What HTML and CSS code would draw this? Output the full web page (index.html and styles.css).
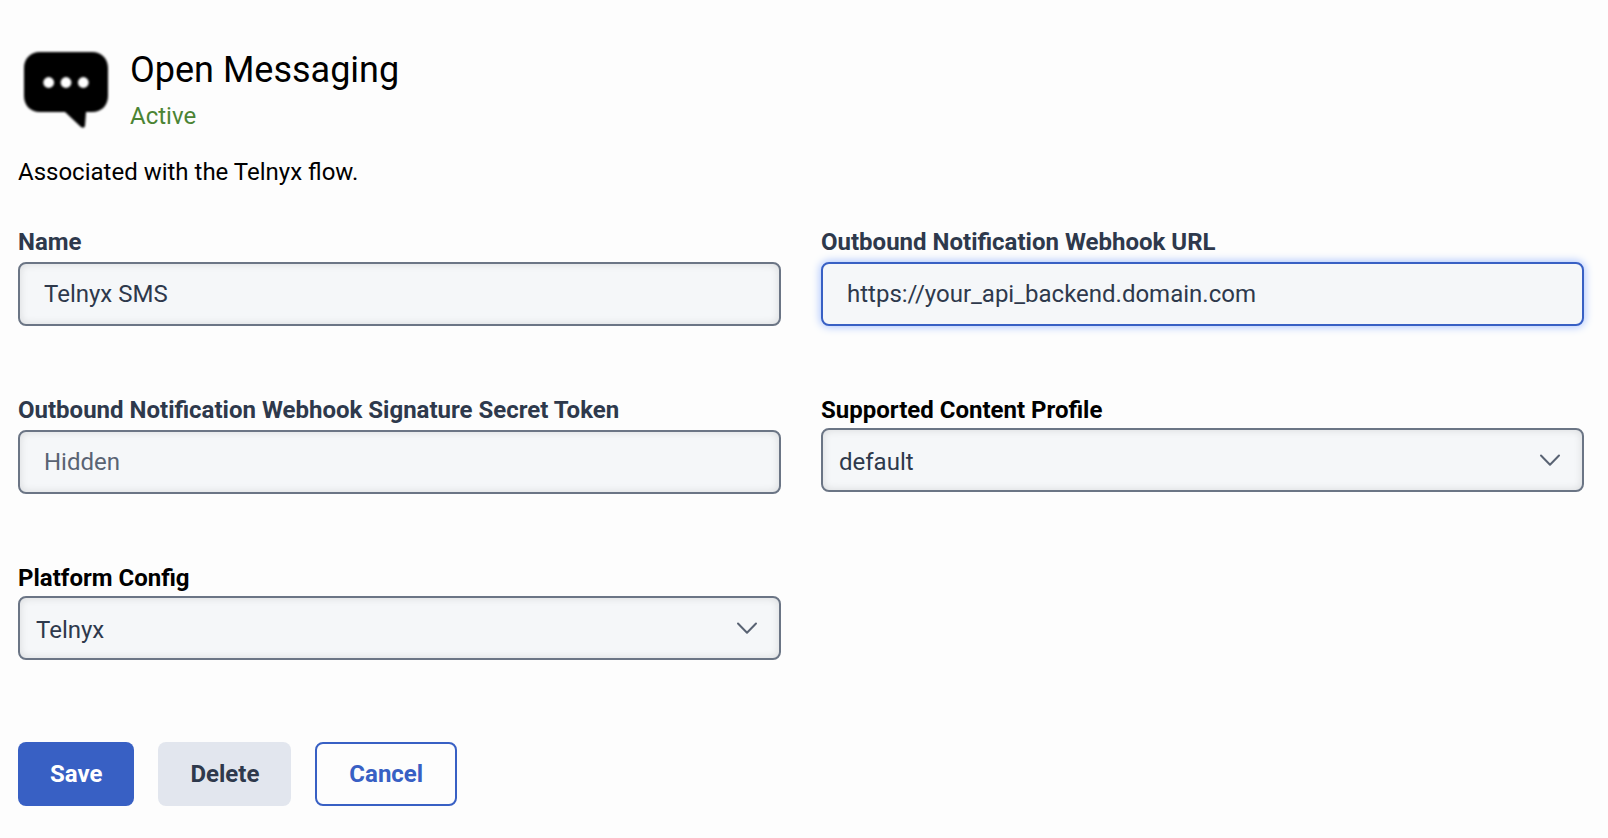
FILE: index.html
```html
<!DOCTYPE html>
<html lang="en">
<head>
<meta charset="utf-8">
<title>Open Messaging</title>
<link rel="stylesheet" href="styles.css">
</head>
<body>
<main class="page">
  <header class="header">
    <svg class="logo" viewBox="0 0 96 84" aria-hidden="true">
      <path d="M22 4H74C84 4 90 11 90 20V48C90 57 84 64 74 64H68L67 78Q66 81 63 79L47 64H22C12 64 6 57 6 48V20C6 11 12 4 22 4Z"/>
      <g class="logo-dots"><circle cx="30.7" cy="34.5" r="5.4"/><circle cx="48" cy="34.5" r="5.4"/><circle cx="65.3" cy="34.5" r="5.4"/></g>
    </svg>
    <div class="heading">
      <h1 class="title">Open Messaging</h1>
      <p class="status">Active</p>
    </div>
  </header>
  <p class="description">Associated with the Telnyx flow.</p>

  <form class="form">
    <div class="fields">
      <div class="field">
        <label class="label" for="name">Name</label>
        <input class="control" id="name" type="text" value="Telnyx SMS">
      </div>
      <div class="field">
        <label class="label" for="url">Outbound Notification Webhook URL</label>
        <input class="control control-active" id="url" type="text" value="https://your_api_backend.domain.com">
      </div>
      <div class="field">
        <label class="label" for="token">Outbound Notification Webhook Signature Secret Token</label>
        <input class="control" id="token" type="text" placeholder="Hidden">
      </div>
      <div class="field field-select">
        <label class="label" for="profile">Supported Content Profile</label>
        <div class="select-wrap">
          <select class="control" id="profile"><option>default</option></select>
          <svg class="chevron" viewBox="0 0 24 16" aria-hidden="true"><path d="M3 3.5L12 12.7L21 3.5"/></svg>
        </div>
      </div>
      <div class="field field-select">
        <label class="label" for="platform">Platform Config</label>
        <div class="select-wrap">
          <select class="control" id="platform"><option>Telnyx</option></select>
          <svg class="chevron" viewBox="0 0 24 16" aria-hidden="true"><path d="M3 3.5L12 12.7L21 3.5"/></svg>
        </div>
      </div>
    </div>
    <div class="actions">
      <button class="button button-primary" type="button">Save</button>
      <button class="button button-secondary" type="button">Delete</button>
      <button class="button button-outline" type="button">Cancel</button>
    </div>
  </form>
</main>
</body>
</html>
```
FILE: styles.css
```css
* {
  box-sizing: border-box;
}

body {
  margin: 0;
  background: #fdfdfd;
  color: #000;
  font: 400 24px/28px Roboto, sans-serif;
}

.page {
  padding: 48px 24px 32px 18px;
}

.header {
  display: flex;
  gap: 16px;
}

.logo {
  width: 96px;
  height: 84px;
  filter: blur(1px);
}

.logo-dots {
  fill: #fff;
}

.title {
  margin: 0;
  font-size: 36px;
  font-weight: 400;
  line-height: 44px;
}

.status {
  margin: 10px 0 0;
  color: #4b8434;
}

.description {
  margin: 26px 0 42px;
}

.fields {
  display: grid;
  grid-template-columns: 1fr 1fr;
  gap: 70px 40px;
  align-items: start;
}

.field {
  display: flex;
  flex-direction: column;
  gap: 6px;
}

.field-select {
  gap: 4px;
}

.label {
  color: #2e394c;
  font-weight: 700;
}

.field-select .label {
  color: #000;
}

.control {
  appearance: none;
  display: block;
  width: 100%;
  height: 64px;
  margin: 0;
  padding: 0 24px;
  border: 2px solid #6b7585;
  border-radius: 8px;
  outline: 0;
  background: #f5f7f9;
  box-shadow: inset 0 0 8px rgb(0 0 0 / 12%);
  color: #2e394c;
  font: inherit;
}

.control::placeholder {
  color: #596373;
  opacity: 1;
}

.control-active,
.control:focus {
  border-color: #3860c4;
  box-shadow: 0 0 8px 1px #aac4ff;
}

.select-wrap {
  position: relative;
}

.select-wrap .control {
  padding: 4px 60px 0 16px;
}

.chevron {
  position: absolute;
  top: 24px;
  right: 22px;
  width: 24px;
  height: 16px;
  fill: none;
  stroke: #596373;
  stroke-width: 2;
  stroke-linecap: round;
  stroke-linejoin: round;
  pointer-events: none;
}

.actions {
  display: flex;
  gap: 24px;
  margin-top: 82px;
}

.button {
  height: 64px;
  padding: 0 32px;
  border: 0;
  border-radius: 8px;
  font: inherit;
  font-weight: 700;
}

.button-primary {
  background: #3860c4;
  color: #fff;
}

.button-secondary {
  background: #e2e6ee;
  color: #2e394c;
}

.button-outline {
  border: 2px solid #3860c4;
  background: #fdfdfd;
  color: #3860c4;
}
```
